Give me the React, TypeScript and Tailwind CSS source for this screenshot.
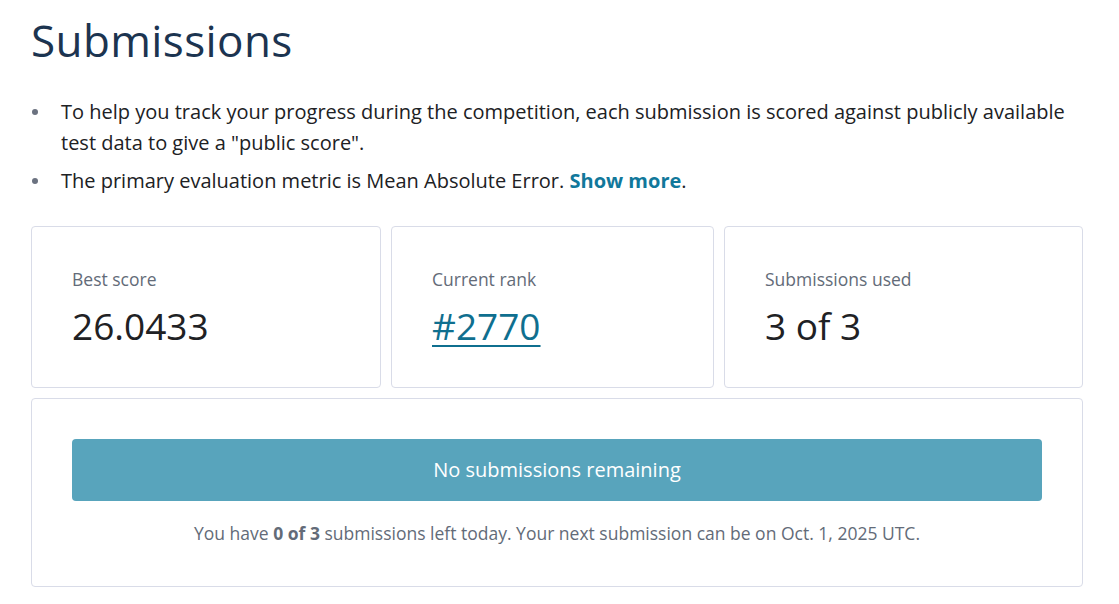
import React from "react";

export default function App() {
  return (
    <div
      className="w-[1119px] h-[604px] bg-white overflow-hidden pl-[31px] pr-[36px]"
      style={{ fontFamily: '"Open Sans", "Noto Sans", sans-serif' }}
    >
      <h1 className="pt-[12px] text-[44px] leading-[56px] text-[#1c3450] tracking-[0.4px]">
        Submissions
      </h1>
      <ul className="mt-[28px] text-[20px] leading-[31px] text-[#202124]">
        <li className="flex">
          <span className="w-[30px] shrink-0 flex items-start pt-[13px] pl-[1px]">
            <span className="w-[6px] h-[6px] rounded-full bg-[#6b7280]" />
          </span>
          <span>
            To help you track your progress during the competition, each submission is scored
            against publicly available test data to give a "public score".
          </span>
        </li>
        <li className="flex mt-[7px]">
          <span className="w-[30px] shrink-0 flex items-start pt-[13px] pl-[1px]">
            <span className="w-[6px] h-[6px] rounded-full bg-[#6b7280]" />
          </span>
          <span>
            The primary evaluation metric is Mean Absolute Error.{" "}
            <a className="font-bold text-[#11789b]">Show more</a>.
          </span>
        </li>
      </ul>
      <div className="mt-[30px] grid grid-cols-[350fr_323fr_359fr] gap-[10px]">
        <div className="h-[162px] border border-[#d9dce8] rounded-[4px] pl-[40px] pt-[40px]">
          <div className="text-[17.5px] leading-[24px] text-[#636b78]">Best score</div>
          <div className="mt-[11px] text-[37px] leading-[48px] text-[#202124]">26.0433</div>
        </div>
        <div className="h-[162px] border border-[#d9dce8] rounded-[4px] pl-[40px] pt-[40px]">
          <div className="text-[17.5px] leading-[24px] text-[#636b78]">Current rank</div>
          <div className="mt-[11px] text-[37px] leading-[48px]">
            <a className="text-[#0f6f8f] underline decoration-[2px] underline-offset-[5px]">#2770</a>
          </div>
        </div>
        <div className="h-[162px] border border-[#d9dce8] rounded-[4px] pl-[40px] pt-[40px]">
          <div className="text-[17.5px] leading-[24px] text-[#636b78]">Submissions used</div>
          <div className="mt-[11px] text-[37px] leading-[48px] text-[#202124]">3 of 3</div>
        </div>
      </div>
      <div className="mt-[10px] h-[189px] border border-[#d9dce8] rounded-[4px] px-[40px] pt-[40px]">
        <div className="h-[62px] rounded-[4px] bg-[#58a4bc] flex items-center justify-center text-white text-[20px]">
          No submissions remaining
        </div>
        <div className="mt-[19px] text-center text-[17.5px] leading-[26px] text-[#636b78]">
          You have <b>0 of 3</b> submissions left today. Your next submission can be on Oct. 1,
          2025 UTC.
        </div>
      </div>
    </div>
  );
}
